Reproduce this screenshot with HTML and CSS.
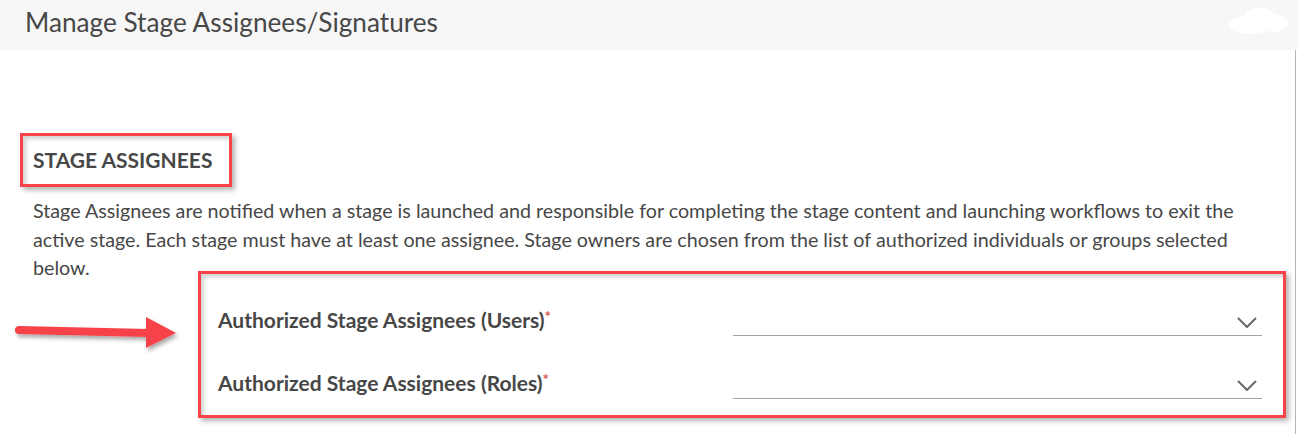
FILE: index.html
```html
<!DOCTYPE html>
<html lang="en">
<head>
<meta charset="utf-8">
<title>Manage Stage Assignees/Signatures</title>
<link rel="stylesheet" href="styles.css">
</head>
<body>
<div class="page">
  <header class="topbar">
    <h1 class="title">Manage Stage Assignees/Signatures</h1>
    <svg class="cloud" width="62" height="28" viewBox="0 0 62 28" aria-hidden="true">
      <ellipse cx="22" cy="18" rx="21" ry="9" fill="#ffffff"/>
      <ellipse cx="32" cy="9" rx="15" ry="8" fill="#ffffff"/>
      <ellipse cx="45" cy="16" rx="16" ry="9" fill="#ffffff"/>
    </svg>
  </header>
  <main class="content">
    <h2 class="section-title">STAGE ASSIGNEES</h2>
    <p class="desc">Stage Assignees are notified when a stage is launched and responsible for completing the stage content and launching workflows to exit the active stage. Each stage must have at least one assignee. Stage owners are chosen from the list of authorized individuals or groups selected below.</p>
    <div class="fields">
      <div class="field-row">
        <label class="field-label">Authorized Stage Assignees (Users)<span class="req">*</span></label>
        <div class="select">
          <svg class="chev" width="20" height="11" viewBox="0 0 20 11" aria-hidden="true"><path d="M1 1 L10 10 L19 1" fill="none" stroke="#666" stroke-width="2"/></svg>
        </div>
      </div>
      <div class="field-row">
        <label class="field-label">Authorized Stage Assignees (Roles)<span class="req">*</span></label>
        <div class="select">
          <svg class="chev" width="20" height="11" viewBox="0 0 20 11" aria-hidden="true"><path d="M1 1 L10 10 L19 1" fill="none" stroke="#666" stroke-width="2"/></svg>
        </div>
      </div>
    </div>
    <svg class="arrow" width="180" height="50" viewBox="0 0 180 50" aria-hidden="true">
      <g filter="url(#sh)">
        <path d="M9 18 L138 21" stroke="#f8434a" stroke-width="8" stroke-linecap="round" fill="none"/>
        <polygon points="136,5 166,21 136,36" fill="#f8434a"/>
      </g>
      <defs>
        <filter id="sh" x="-10%" y="-30%" width="130%" height="180%">
          <feDropShadow dx="2" dy="3" stdDeviation="2" flood-color="#000" flood-opacity="0.35"/>
        </filter>
      </defs>
    </svg>
  </main>
</div>
</body>
</html>
```
FILE: styles.css
```css
html, body {
  margin: 0;
  padding: 0;
  background: #ffffff;
}
body {
  font-family: Lato, "Open Sans", "Liberation Sans", sans-serif;
  color: #474747;
}
.page {
  width: 1298px;
  height: 434px;
  overflow: hidden;
}
.topbar {
  height: 50px;
  background: #f7f7f7;
  display: flex;
  align-items: center;
  justify-content: space-between;
  padding: 0 8px 0 25px;
  box-sizing: border-box;
}
.title {
  margin: 0;
  font-size: 26.2px;
  font-weight: 400;
  color: #474747;
  padding-bottom: 6px;
}
.cloud {
  align-self: flex-start;
  margin-top: 7px;
}
.content {
  position: relative;
  height: 384px;
  border-right: 1px solid #b5b5b5;
  width: 1296px;
  box-sizing: border-box;
  padding: 83px 0 0 33px;
}
.section-title {
  display: inline-block;
  margin: 0 0 0 -13px;
  height: 48px;
  line-height: 48px;
  padding: 0 17px 0 10px;
  border: 3px solid #f8434a;
  font-size: 21px;
  font-weight: 700;
  color: #474747;
  box-shadow: 3px 3px 5px rgba(0, 0, 0, 0.3), inset 3px 3px 4px rgba(0, 0, 0, 0.18);
}
.desc {
  margin: 10px 0 0 0;
  width: 1235px;
  font-size: 19.7px;
  line-height: 28.5px;
  color: #474747;
}
.fields {
  margin: -12px 0 0 165px;
  width: 1088px;
  box-sizing: border-box;
  border: 3px solid #f8434a;
  padding: 22px 21px 16px 17px;
  display: flex;
  flex-direction: column;
  gap: 23px;
  box-shadow: 3px 3px 5px rgba(0, 0, 0, 0.3), inset 3px 3px 4px rgba(0, 0, 0, 0.18);
}
.field-row {
  display: flex;
  align-items: flex-end;
  height: 40px;
}
.field-label {
  width: 515px;
  font-size: 21px;
  font-weight: 700;
  line-height: 28px;
  padding-bottom: 2px;
  color: #474747;
}
.req {
  color: #d9534f;
  font-size: 15px;
  vertical-align: top;
  position: relative;
  top: -4px;
}
.select {
  flex: 1;
  height: 40px;
  box-sizing: border-box;
  border-bottom: 1px solid #a5a5a5;
  display: flex;
  justify-content: flex-end;
  align-items: flex-end;
  padding: 0 5px 7px 0;
}
.arrow {
  position: absolute;
  left: 10px;
  top: 262px;
}
```
